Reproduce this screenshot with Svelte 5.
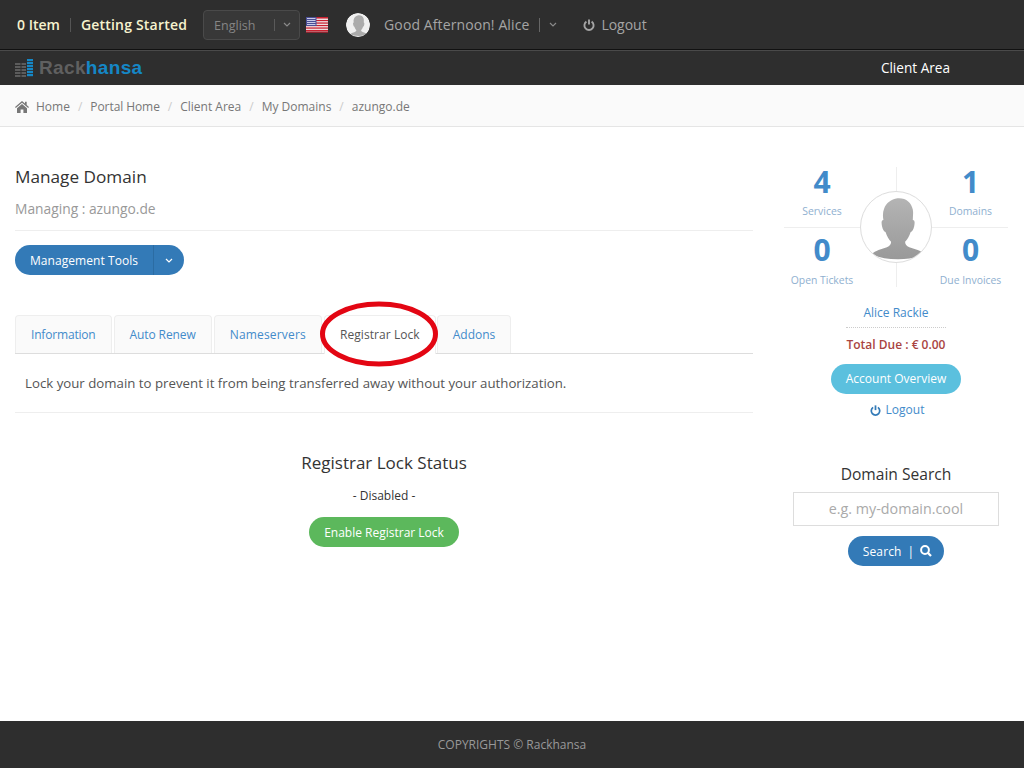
<script>
  const tabs = [
    { label: 'Information' },
    { label: 'Auto Renew' },
    { label: 'Nameservers' },
    { label: 'Registrar Lock', active: true },
    { label: 'Addons' }
  ];
  const crumbs = ['Portal Home', 'Client Area', 'My Domains'];
  const stats = [
    { n: 4, l: 'Services' },
    { n: 1, l: 'Domains' },
    { n: 0, l: 'Open Tickets' },
    { n: 0, l: 'Due Invoices' }
  ];
  const logoRows = [0, 3, 6, 9, 12, 15];
</script>

{#snippet power()}
  <svg class="power" viewBox="0 0 12 12" aria-hidden="true"><path d="M3.4 2.6a4.6 4.6 0 1 0 5.2 0" fill="none" stroke="currentColor" stroke-width="1.9"/><path d="M6 .4v5.2" fill="none" stroke="currentColor" stroke-width="1.9"/></svg>
{/snippet}
{#snippet chevron()}
  <svg class="chev" viewBox="0 0 8 5" aria-hidden="true"><path d="M1 1l3 3 3-3" fill="none" stroke="currentColor" stroke-width="1.2"/></svg>
{/snippet}
{#snippet person()}
  <path d="M52 9c12-1 20 6 22 16 1 5 0 10 0 15 3 0 3 4 2 9-1 5-3 8-5 8-2 6-5 11-8 14 0 4 2 6 6 8l12 4c5 2 8 4 9 6-9 5-22 7-37 7s-27-2-37-7c2-3 5-4 9-6l12-4c4-2 6-4 6-8-3-3-6-8-8-14-2 0-4-3-5-8-1-5-1-9 2-9-1-6-1-11 1-16 3-9 10-13 19-15z"/>
{/snippet}

<div class="page">
  <header class="topbar">
    <span class="strong">0 Item</span>
    <span class="sep"></span>
    <span class="strong wide">Getting Started</span>
    <div class="lang"><span>English</span><i></i>{@render chevron()}</div>
    <svg class="flag" viewBox="0 0 22 16" aria-hidden="true">
      <rect width="22" height="16" fill="#f4f4f4"/>
      <g fill="#c8202f"><rect width="22" height="1.6"/><rect y="2.9" width="22" height="1.3"/><rect y="5.4" width="22" height="1.3"/><rect y="7.9" width="22" height="1.3"/><rect y="10.4" width="22" height="1.3"/><rect y="12.9" width="22" height="1.6"/></g>
      <rect width="10.5" height="9" fill="#4a4f96"/>
      <g fill="#c9cbe6"><rect x="1" y="1" width="8.5" height="1"/><rect x="1" y="3" width="8.5" height="1"/><rect x="1" y="5" width="8.5" height="1"/><rect x="1" y="7" width="8.5" height="1"/></g>
      <rect y="14.6" width="22" height="1.4" fill="#8d2530"/>
    </svg>
    <svg class="avatar" viewBox="0 0 100 100" aria-hidden="true">
      <circle cx="50" cy="50" r="50" fill="#f0f0f0"/>
      <clipPath id="ac"><circle cx="50" cy="50" r="50"/></clipPath>
      <g fill="#ababab" clip-path="url(#ac)">{@render person()}</g>
    </svg>
    <span class="greet">Good Afternoon! Alice</span>
    <i class="greet-sep"></i>
    <span class="greet-chev">{@render chevron()}</span>
    <span class="logout">{@render power()}Logout</span>
  </header>

  <nav class="brandbar">
    <div class="logo">
      <svg viewBox="0 0 18 18" aria-hidden="true">
        <g fill="#5c5c5c">
          {#each logoRows.slice(1) as y}<rect x="0" y={y + 1} width="5.5" height="2"/><rect x="6.5" y={y + 1} width="4.5" height="2"/>{/each}
        </g>
        <g fill="#1587c6">
          {#each logoRows as y}<rect x="12" y={y} width="6" height="2.2"/>{/each}
        </g>
      </svg>
      <span class="rack">Rack</span><span class="hansa">hansa</span>
    </div>
    <span class="client">Client Area</span>
  </nav>

  <div class="crumbs">
    <svg class="home" viewBox="0 0 14 12" aria-hidden="true"><path d="M7 0 0 6l.8.9L7 1.7l6.2 5.2L14 6l-2.3-2V.8H10v1.7zM2 7.2V12h3.6V8.6h2.8V12H12V7.2L7 3z" fill="#777"/></svg>
    <span>Home</span>
    {#each crumbs as c}<b>/</b><span>{c}</span>{/each}
    <b>/</b><span>azungo.de</span>
  </div>

  <main class="content">
    <section class="left">
      <h1>Manage Domain</h1>
      <p class="sub">Managing : azungo.de</p>
      <div class="tools">
        <span class="tool-main">Management Tools</span><span class="tool-caret">{@render chevron()}</span>
      </div>
      <div class="tabs">
        {#each tabs as t}
          <span class="tab" class:active={t.active}>{t.label}</span>
        {/each}
        <svg class="ring" viewBox="0 0 122 72" aria-hidden="true"><ellipse cx="61" cy="36" rx="56.5" ry="30" fill="none" stroke="#e30613" stroke-width="5"/></svg>
      </div>
      <p class="desc">Lock your domain to prevent it from being transferred away without your authorization.</p>
      <div class="status">
        <h2>Registrar Lock Status</h2>
        <p>- Disabled -</p>
        <span class="btn-green">Enable Registrar Lock</span>
      </div>
    </section>

    <aside class="side">
      <div class="stats">
        {#each stats as s}
          <div class="stat"><strong>{s.n}</strong><span>{s.l}</span></div>
        {/each}
        <div class="bigavatar">
          <svg viewBox="0 0 100 100" aria-hidden="true">
            <defs><linearGradient id="pg" x1="0" y1="0" x2="0" y2="1"><stop offset="0" stop-color="#b4b4b4"/><stop offset="1" stop-color="#999"/></linearGradient></defs>
            <g fill="url(#pg)">{@render person()}</g>
          </svg>
        </div>
      </div>
      <div class="who">Alice Rackie</div>
      <div class="due">Total Due : € 0.00</div>
      <span class="btn-info">Account Overview</span>
      <div class="side-logout">{@render power()}Logout</div>
      <h3>Domain Search</h3>
      <div class="input">e.g. my-domain.cool</div>
      <span class="btn-search">Search <i>|</i>
        <svg viewBox="0 0 12 12" aria-hidden="true"><circle cx="5" cy="5" r="3.9" fill="none" stroke="#fff" stroke-width="2"/><path d="M7.8 7.8 11 11" stroke="#fff" stroke-width="2.3"/></svg>
      </span>
    </aside>
  </main>

  <footer>COPYRIGHTS © Rackhansa</footer>
</div>

<style>
  :global(body) { margin: 0; background: #fff; }
  .page { width: 1024px; height: 768px; display: flex; flex-direction: column; font-family: "Open Sans", sans-serif; font-size: 12px; color: #333; overflow: hidden; }

  .topbar { height: 49px; background: #2e2e2e; border-bottom: 1px solid #111; box-shadow: 0 1px 0 #4a4a4a; display: flex; align-items: center; padding-left: 17px; flex: none; position: relative; }
  .strong { color: #f6f3cf; font-size: 14px; font-weight: 600; }
  .strong.wide { letter-spacing: .2px; }
  .sep { width: 1px; height: 14px; background: #555; margin: 0 10px; }
  .lang { height: 28px; margin-left: 16px; border: 1px solid #4a4a4a; border-radius: 4px; background: #383838; color: #858585; font-size: 12.5px; display: flex; align-items: center; padding-left: 10px; width: 85px; }
  .lang span { width: 60px; margin-top: 1px; }
  .lang i { width: 1px; height: 12px; background: #5a5a5a; margin-right: 8px; }
  .chev { width: 8px; height: 5px; color: #8a8a8a; display: block; }
  .flag { width: 22px; height: 16px; margin-left: 6px; }
  .avatar { width: 24px; height: 24px; margin-left: 18px; border-radius: 50%; }
  .greet { color: #a5a5a5; font-size: 14px; letter-spacing: .1px; margin-left: 14px; }
  .greet-sep { width: 1px; height: 14px; background: #666; margin-left: 10px; }
  .greet-chev { margin-left: 9px; }
  .logout { color: #a5a5a5; font-size: 14px; margin-left: 26px; display: flex; align-items: center; gap: 6px; letter-spacing: -.02px; }
  .power { width: 12px; height: 12px; }

  .brandbar { height: 34px; margin-top: 1px; background: #2e2e2e; display: flex; align-items: center; justify-content: space-between; padding: 0 74px 0 15px; flex: none; }
  .logo { display: flex; align-items: center; font-family: "Liberation Sans", sans-serif; font-weight: 700; font-size: 19px; letter-spacing: .35px; }
  .logo svg { width: 18px; height: 18px; margin-right: 6px; margin-top: -1px; }
  .rack { color: #606060; }
  .hansa { color: #1587c6; }
  .client { color: #fff; font-size: 13.6px; margin-top: -1px; }

  .crumbs { height: 39px; padding-top: 2px; background: #fafafa; border-bottom: 1px solid #e5e5e5; display: flex; align-items: center; padding-left: 15px; color: #777; flex: none; }
  .crumbs span:nth-of-type(2) { letter-spacing: -.08px; }
  .home { width: 14px; height: 12px; margin-right: 7px; }
  .crumbs b { font-weight: 400; color: #ccc; margin: 0 8px; }

  .content { flex: 1; display: flex; padding: 40px 16px 0 15px; justify-content: space-between; min-height: 0; }
  .left { width: 738px; }
  h1 { margin: -1px 0 0; font-size: 17.2px; font-weight: 400; line-height: 22px; color: #333; }
  .sub { margin: 11px 0 0; padding-bottom: 11px; font-size: 13.8px; line-height: 20px; color: #999; border-bottom: 1px solid #eee; }
  .tools { display: flex; margin-top: 14px; color: #fff; height: 30px; line-height: 31px; }
  .tool-main { background: #337ab7; border-radius: 15px 0 0 15px; padding: 0 15px; border-right: 1px solid #2b6ca3; letter-spacing: .06px; }
  .tool-caret { background: #337ab7; border-radius: 0 15px 15px 0; width: 30px; display: flex; align-items: center; justify-content: center; }
  .tool-caret .chev { color: #fff; }

  .tabs { display: flex; gap: 2px; margin-top: 40px; height: 38px; border-bottom: 1px solid #ddd; position: relative; }
  .tab { height: 38px; line-height: 38px; padding: 0 15px; color: #428bca; background: #fafafa; border: 1px solid #eee; border-bottom: 0; border-radius: 4px 4px 0 0; box-sizing: border-box; }
  .tab:nth-child(1) { letter-spacing: -.18px; }
  .tab:nth-child(2) { letter-spacing: -.1px; }
  .tab:nth-child(3) { letter-spacing: .18px; }
  .tab:nth-child(5) { margin-left: -1px; }
  .tab.active { color: #555; background: #fff; height: 39px; margin-bottom: -1px; letter-spacing: .07px; }
  .ring { position: absolute; left: 303px; top: -17px; width: 122px; height: 72px; }

  .desc { margin: 0; padding: 19px 10px 19px; font-size: 13.25px; line-height: 20px; color: #555; border-bottom: 1px solid #eee; }
  .status { display: flex; flex-direction: column; align-items: center; margin-top: 38px; }
  h2 { margin: 0; font-size: 17px; font-weight: 400; line-height: 24px; color: #333; }
  .status p { margin: 12px 0 0; line-height: 18px; color: #333; }
  .btn-green { margin-top: 12px; height: 30px; line-height: 31px; padding: 0 15px; border-radius: 15px; background: #5cb85c; color: #fff; }

  .side { width: 224px; display: flex; flex-direction: column; align-items: center; }
  .stats { width: 224px; height: 120px; display: grid; grid-template-columns: 113px 111px; grid-template-rows: 61px 59px; position: relative; }
  .stat { display: flex; flex-direction: column; align-items: center; color: #8fb0d0; font-size: 10.4px; border-color: #eee; border-style: solid; border-width: 0; line-height: 14px; }
  .stat:nth-child(1), .stat:nth-child(2) { border-bottom-width: 1px; }
  .stat:nth-child(odd) { border-right-width: 1px; padding-right: 36px; }
  .stat:nth-child(even) { padding-left: 36px; }
  .stat strong { font-size: 30px; line-height: 30px; color: #428bca; margin-bottom: 7px; }
  .stat:nth-child(3) strong, .stat:nth-child(4) strong { margin-top: 7px; margin-bottom: 8px; }
  .bigavatar { position: absolute; left: 76px; top: 24px; width: 70px; height: 70px; border: 1px solid #ddd; border-radius: 50%; background: #fff; overflow: hidden; }
  .bigavatar svg { display: block; width: 70px; height: 70px; }

  .who { width: 100px; text-align: center; margin-top: 17px; padding-bottom: 5px; border-bottom: 1px dotted #ccc; color: #428bca; line-height: 18px; }
  .due { margin-top: 8px; color: #a94442; font-weight: 600; line-height: 18px; }
  .btn-info { margin-top: 10px; height: 30px; line-height: 30px; padding: 0 15px; border-radius: 15px; background: #5bc0de; color: #fff; }
  .side-logout { margin: 7px 0 0 2px; color: #428bca; line-height: 18px; display: flex; align-items: center; gap: 5px; }
  .side-logout .power { width: 11px; height: 11px; color: #337ab7; }
  h3 { margin: 45px 0 0; font-size: 15.6px; font-weight: 400; line-height: 20px; color: #333; }
  .input { width: 204px; height: 32px; margin-top: 8px; border: 1px solid #ddd; text-align: center; line-height: 32px; font-size: 14.3px; color: #aaa; }
  .btn-search { margin-top: 10px; height: 30px; display: flex; align-items: center; gap: 6px; padding: 0 12px 0 15px; border-radius: 15px; background: #337ab7; color: #fff; letter-spacing: .1px; }
  .btn-search i { font-style: normal; }
  .btn-search svg { width: 12px; height: 12px; }

  footer { height: 47px; background: #2e2e2e; color: #999; text-align: center; line-height: 47px; flex: none; }
</style>
